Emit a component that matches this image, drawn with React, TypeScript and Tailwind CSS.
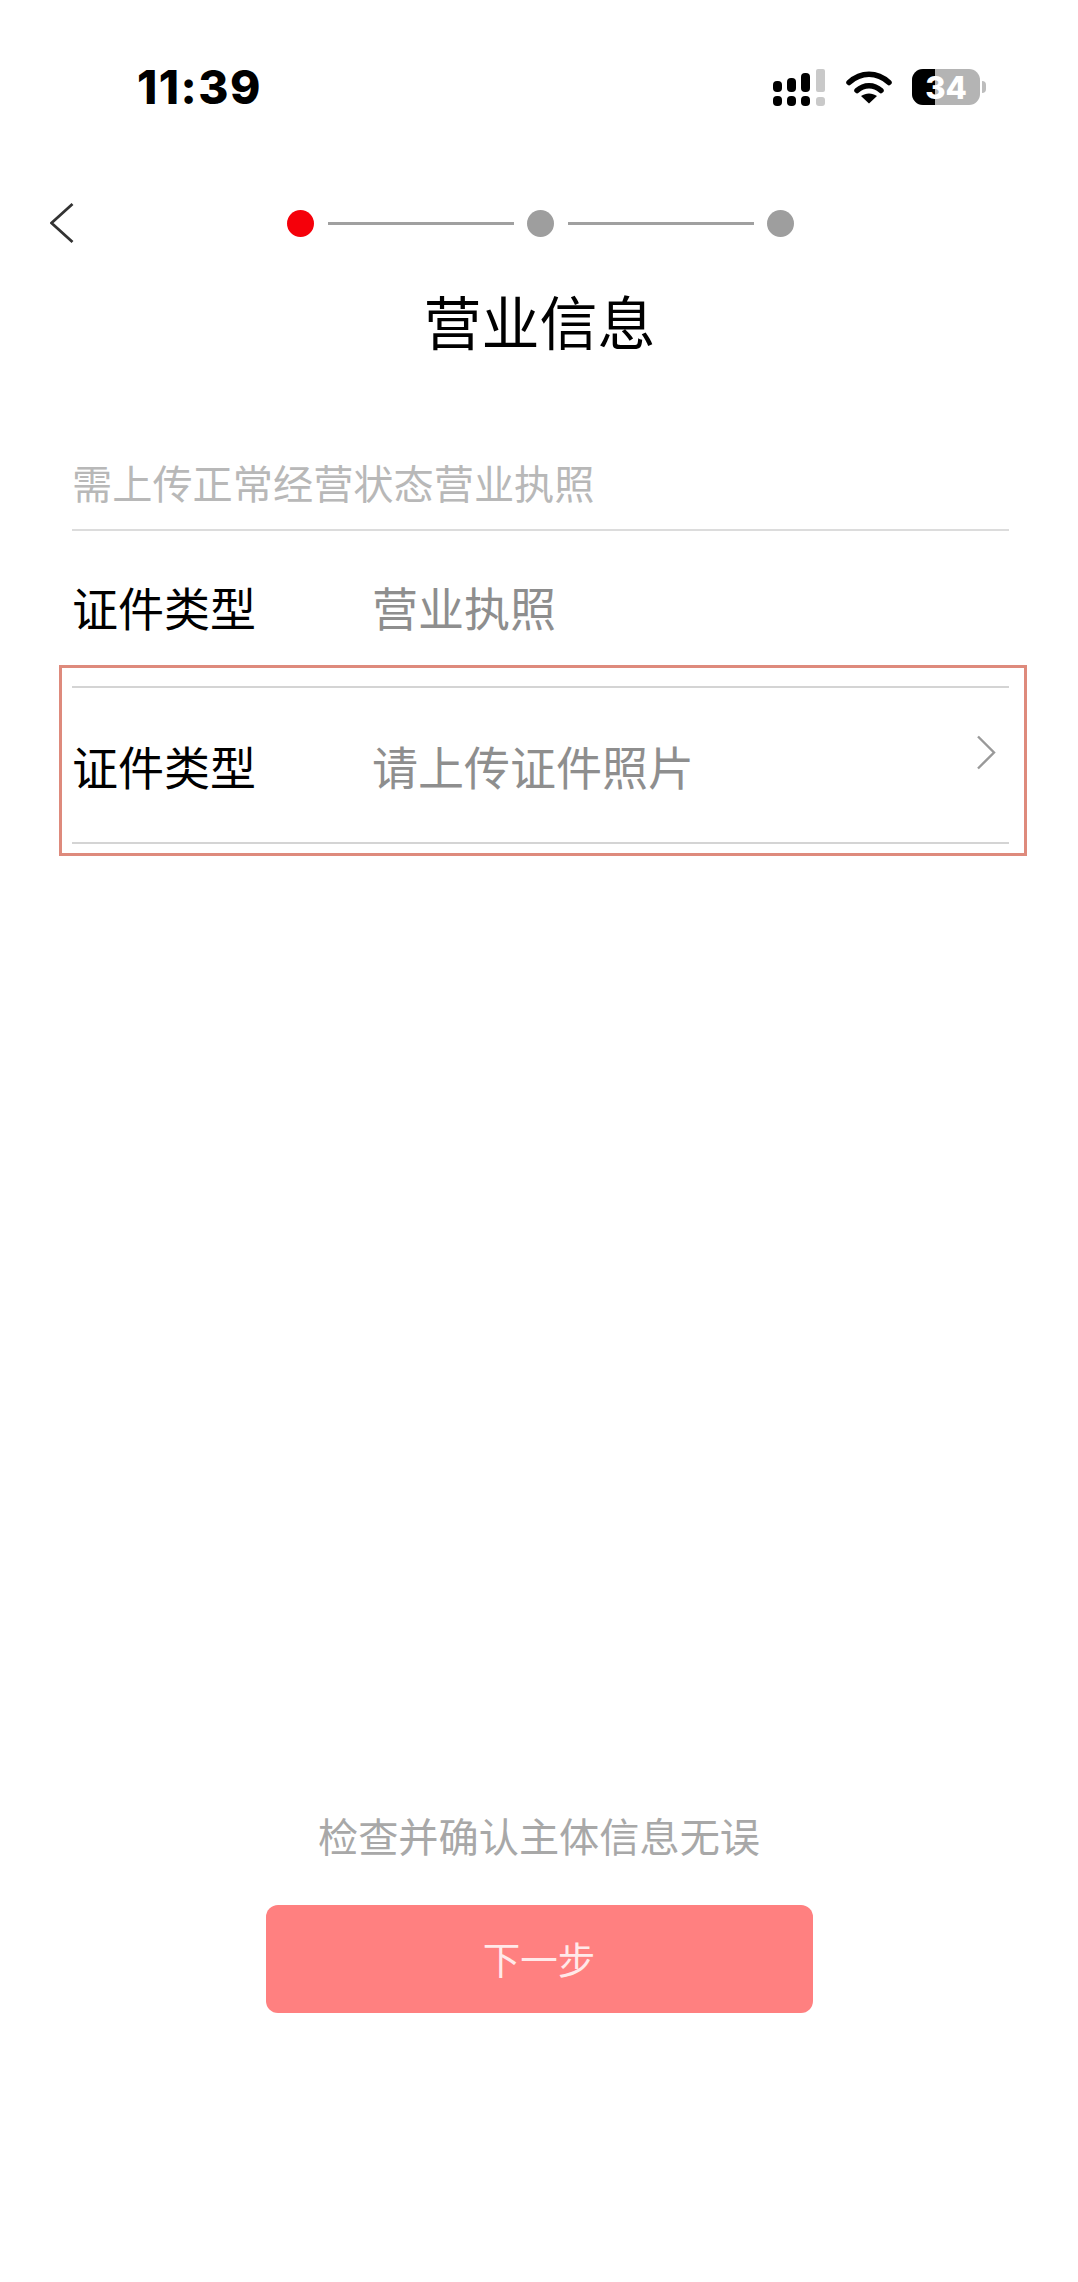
import React from 'react';

const cjk = 'font-["Noto_Sans_CJK_SC","Noto_Sans",sans-serif]';

function SignalIcon() {
  return (
    <svg width="54" height="37" viewBox="0 0 54 37" className="block">
      <rect x="1" y="12" width="9" height="11" rx="4" fill="#000" />
      <rect x="15" y="9" width="9" height="14" rx="4" fill="#000" />
      <rect x="29" y="4" width="9" height="19" rx="4" fill="#000" />
      <rect x="44" y="0" width="9" height="23" rx="2" fill="#c9c9c9" />
      <rect x="1" y="27" width="9" height="10" rx="4" fill="#000" />
      <rect x="15" y="27" width="9" height="10" rx="4" fill="#000" />
      <rect x="29" y="27" width="9" height="10" rx="4" fill="#000" />
      <rect x="44" y="28" width="9" height="9" rx="3" fill="#c9c9c9" />
    </svg>
  );
}

function WifiIcon() {
  return (
    <svg width="46" height="34" viewBox="0 0 46 34" className="block">
      <path d="M3 12.5C15 1.5 31 1.5 43 12.5" fill="none" stroke="#000" strokeWidth="5.5" strokeLinecap="round" />
      <path d="M11 20.5C18 14 28 14 35 20.5" fill="none" stroke="#000" strokeWidth="5.5" strokeLinecap="round" />
      <path d="M23 33.5L15 26C20 22.5 26 22.5 31 26Z" fill="#000" />
    </svg>
  );
}

function BatteryIcon() {
  return (
    <div className="flex items-center gap-[2px]">
      <div className="relative flex h-[36px] w-[68px] items-center justify-center overflow-hidden rounded-[11px] bg-[#b4b4b4]">
        <div className="absolute inset-y-0 left-0 w-[23px] bg-black" />
        <span className="relative font-['Inter',sans-serif] text-[31px] leading-none font-extrabold text-white">34</span>
      </div>
      <div className="h-[12px] w-[4px] rounded-r-full bg-[#bdbdbd]" />
    </div>
  );
}

const Dot = ({ active }: { active?: boolean }) => (
  <div className={`h-[27px] w-[27px] rounded-full ${active ? 'bg-[#f5000a]' : 'bg-[#9e9e9e]'}`} />
);
const StepLine = () => <div className="h-[3px] w-[186px] bg-[#a0a0a0]" />;

export default function App() {
  return (
    <div className={`flex h-[2282px] w-[1078px] flex-col bg-white ${cjk}`}>
      {/* status bar */}
      <div className="mt-[67px] flex h-[40px] items-center justify-between pr-[92px] pl-[137px]">
        <span className="font-['Inter',sans-serif] text-[46px] leading-none font-extrabold tracking-[1.5px] text-black">11:39</span>
        <div className="flex items-center gap-[20px]">
          <SignalIcon />
          <WifiIcon />
          <BatteryIcon />
        </div>
      </div>

      {/* steps */}
      <div className="mt-[95px] flex h-[42px] items-center pl-[50px]">
        <svg width="24" height="42" viewBox="0 0 24 42">
          <path d="M22.5 2L1.5 21L22.5 40" fill="none" stroke="#333" strokeWidth="2.8" />
        </svg>
        <div className="ml-[213px] flex items-center gap-[13.5px]">
          <Dot active />
          <StepLine />
          <Dot />
          <StepLine />
          <Dot />
        </div>
      </div>

      <h1 className="mt-[43px] pl-[1px] text-center text-[58px] leading-[66px] font-normal text-black">营业信息</h1>

      {/* form */}
      <div className="mt-[103px] ml-[72px] flex h-[75px] w-[937px] items-start border-b-[2px] border-[#dcdcdc]">
        <span className="text-[40.2px] leading-[52px] text-[#b8b8b8]">需上传正常经营状态营业执照</span>
      </div>
      <div className="mt-[48px] ml-[72px] flex items-center">
        <span className="w-[300px] text-[46px] leading-[54px] text-black">证件类型</span>
        <span className="text-[46px] leading-[54px] text-[#8e8e8e]">营业执照</span>
      </div>
      <div className="mt-[32px] ml-[59px] flex h-[191px] w-[968px] flex-col border-[3px] border-[#de8a7c] pt-[18px] pr-[15px] pl-[10px]">
        <div className="h-[2px] bg-[#d4d4d4]" />
        <div className="flex h-[154px] items-center">
          <span className="w-[300px] text-[46px] leading-[54px] text-black">证件类型</span>
          <span className="text-[46px] leading-[54px] text-[#8e8e8e]">请上传证件照片</span>
          <svg width="20" height="35" viewBox="0 0 20 35" className="mr-[13px] mb-[25px] ml-auto">
            <path d="M2 1.5L18 17.5L2 33.5" fill="none" stroke="#999" strokeWidth="2.4" />
          </svg>
        </div>
        <div className="h-[2px] bg-[#d4d4d4]" />
      </div>

      {/* footer */}
      <div className="mt-auto mb-[269px] flex flex-col items-center">
        <span className="text-[40.2px] leading-[48px] text-[#a8a8a8]">检查并确认主体信息无误</span>
        <button className="mt-[46px] flex h-[108px] w-[547px] items-center justify-center rounded-[12px] bg-[#ff8080] pb-[2px] text-[37.5px] text-[#ffe9e9]">
          下一步
        </button>
      </div>
    </div>
  );
}
